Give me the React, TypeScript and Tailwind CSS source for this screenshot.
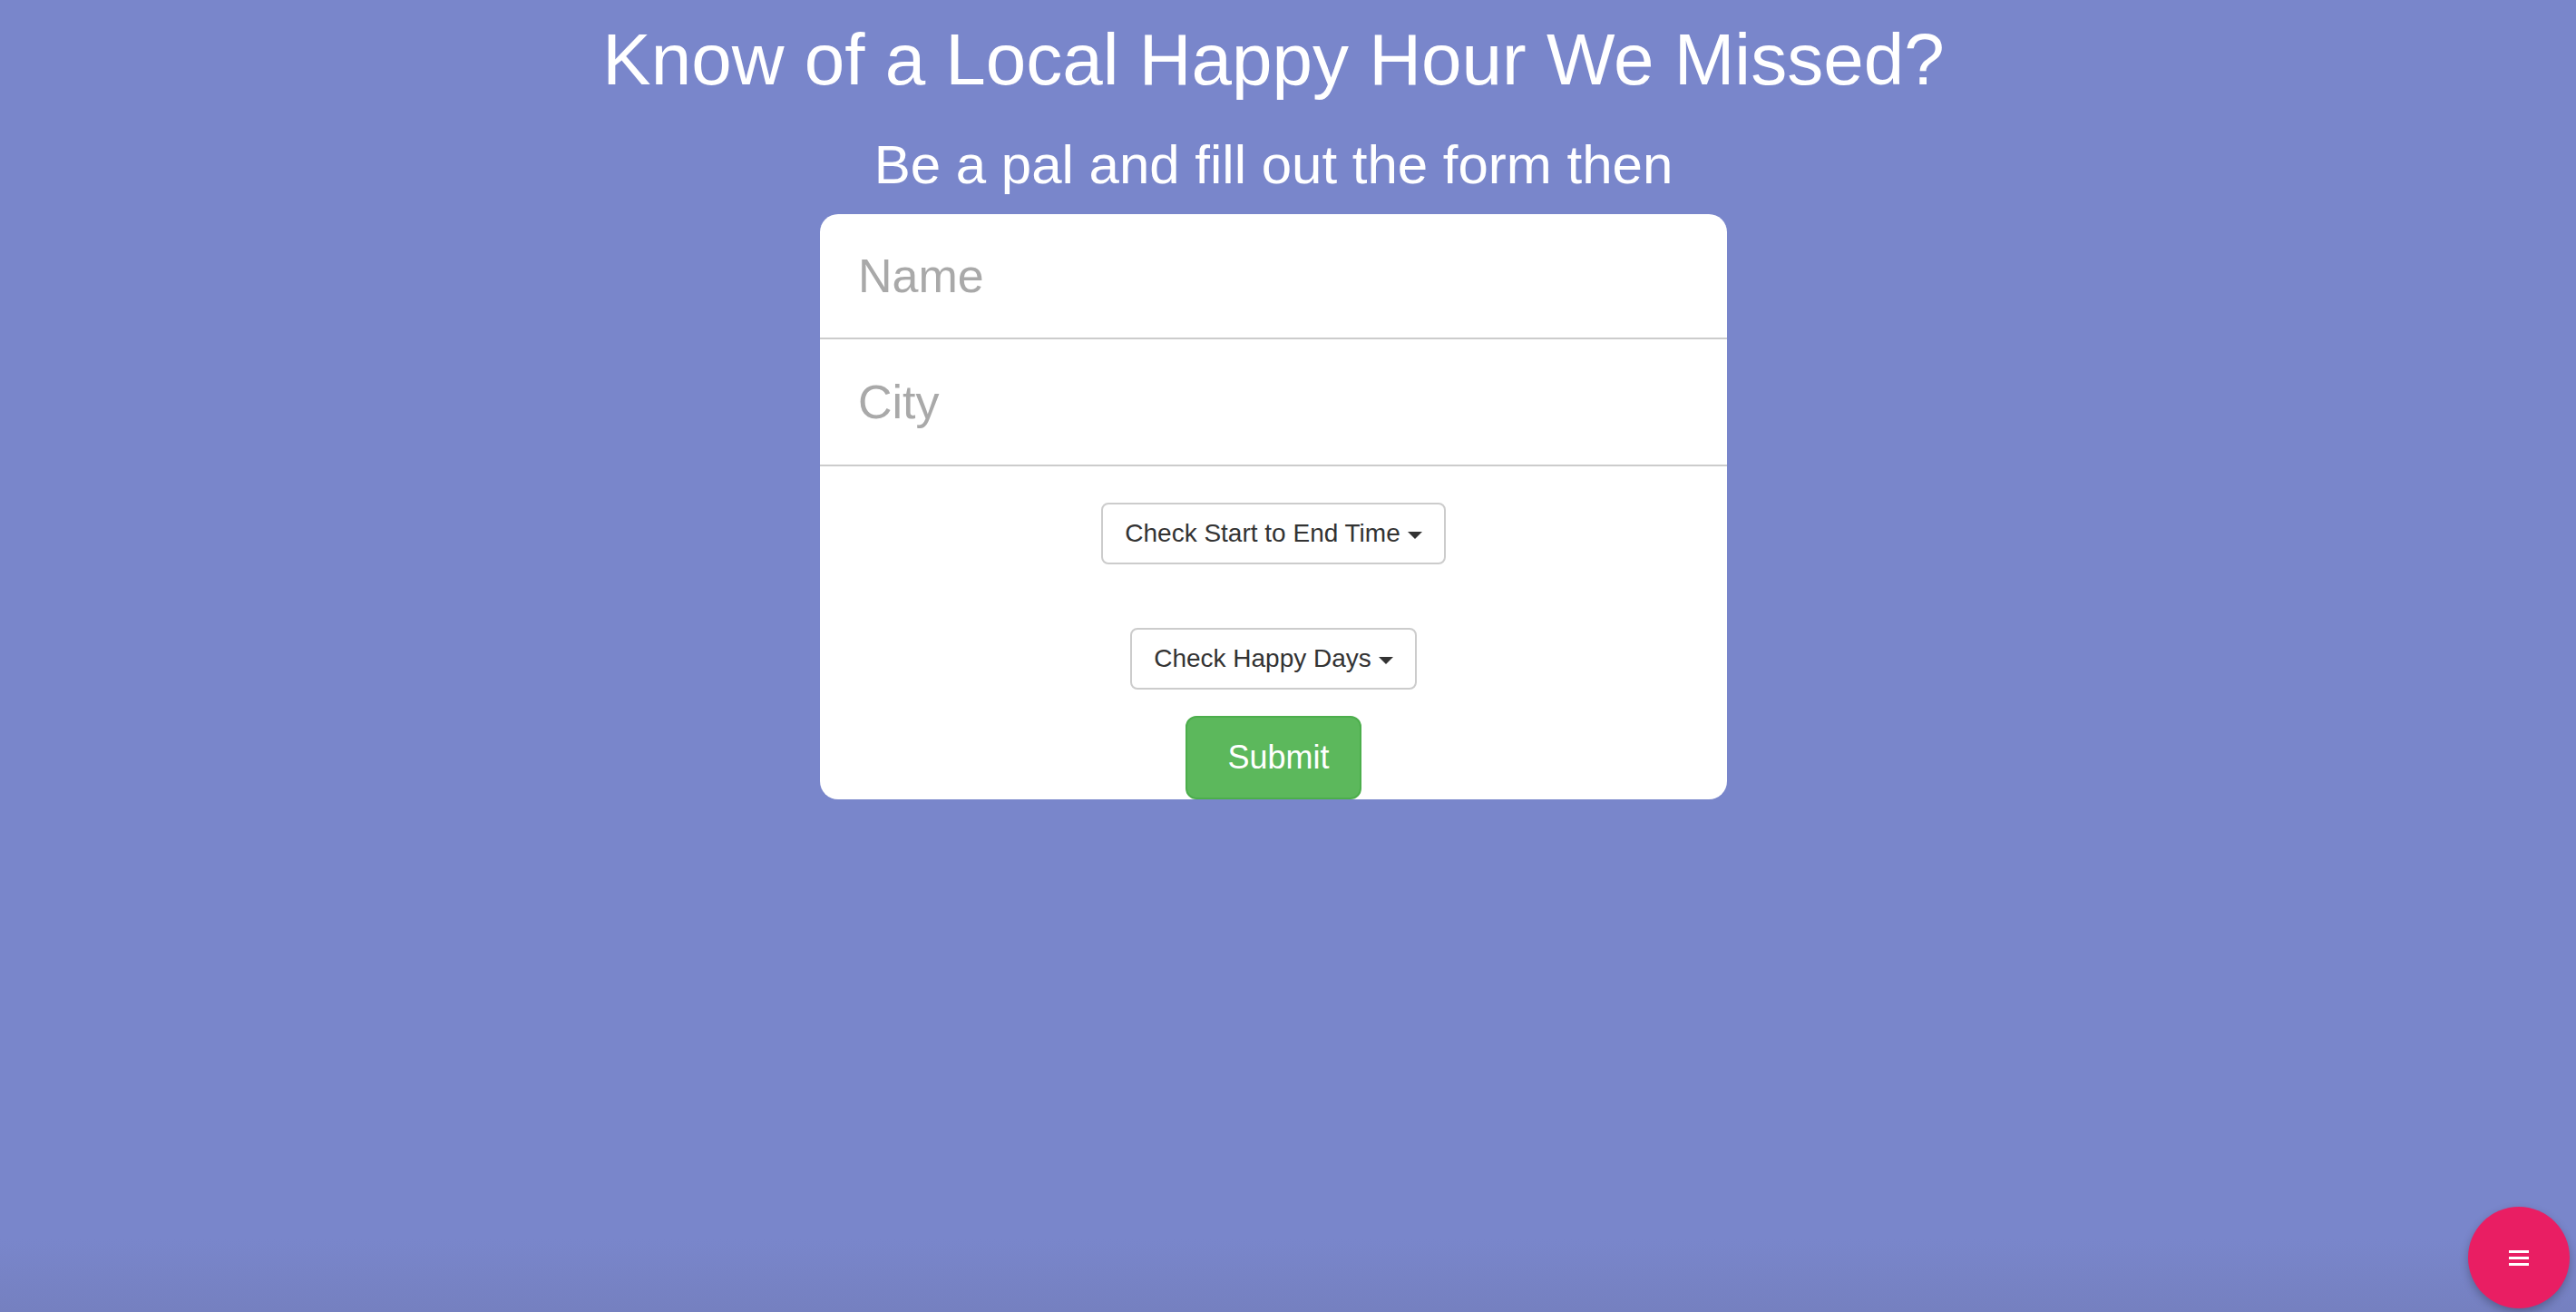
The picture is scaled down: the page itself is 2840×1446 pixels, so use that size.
import { useState } from 'react';

function Caret() {
  return (
    <span className="ml-[8px] inline-block h-0 w-0 border-x-[8px] border-t-[8px] border-x-transparent border-t-[#333] align-middle" />
  );
}

function DropdownButton({ label }: { label: string }) {
  return (
    <button
      type="button"
      className="h-[68px] rounded-[8px] border-2 border-[#ccc] bg-white px-[24px] text-[28px] leading-[40px] text-[#333]"
    >
      {label}
      <Caret />
    </button>
  );
}

export default function App() {
  const [name, setName] = useState('');
  const [city, setCity] = useState('');

  return (
    <div className="min-h-screen bg-[linear-gradient(to_bottom,#7986cb_calc(100%-80px),#7580c0)] pr-[32px] font-['Liberation_Sans',Arial,sans-serif] text-white">
      <div className="flex flex-col items-center">
        <h1 className="mt-[22px] text-[80px] leading-[88px]">Know of a Local Happy Hour We Missed?</h1>
        <h2 className="mt-[39px] text-[60px] leading-[66px]">Be a pal and fill out the form then</h2>

        {/* Form card */}
        <form
          className="mt-[21px] flex w-[1000px] flex-col items-center overflow-hidden rounded-[20px] bg-white"
          onSubmit={(e) => e.preventDefault()}
        >
          <input
            value={name}
            onChange={(e) => setName(e.target.value)}
            placeholder="Name"
            className="h-[138px] w-full border-b-2 border-[#ccc] px-[42px] text-[52px] text-[#333] outline-none placeholder:text-[#a9a9a9]"
          />
          <input
            value={city}
            onChange={(e) => setCity(e.target.value)}
            placeholder="City"
            className="h-[140px] w-full border-b-2 border-[#ccc] px-[42px] text-[52px] text-[#333] outline-none placeholder:text-[#a9a9a9]"
          />

          <div className="mt-[40px]">
            <DropdownButton label="Check Start to End Time" />
          </div>
          <div className="mt-[70px]">
            <DropdownButton label="Check Happy Days" />
          </div>

          <button
            type="submit"
            className="mt-[29px] h-[92px] rounded-[12px] border-2 border-[#4cae4c] bg-[#5cb85c] pl-[44px] pr-[33px] text-[36px] leading-[48px] text-white"
          >
            Submit
          </button>
        </form>
      </div>

      {/* Floating menu button */}
      <button
        type="button"
        className="fixed bottom-[4px] right-[7px] flex h-[112px] w-[112px] items-center justify-center rounded-full bg-[#e91e63] shadow-[0_4px_10px_rgba(0,0,0,0.25)]"
      >
        <span className="flex flex-col gap-[4px]">
          <span className="block h-[3px] w-[22px] bg-white" />
          <span className="block h-[3px] w-[22px] bg-white" />
          <span className="block h-[3px] w-[22px] bg-white" />
        </span>
      </button>
    </div>
  );
}
